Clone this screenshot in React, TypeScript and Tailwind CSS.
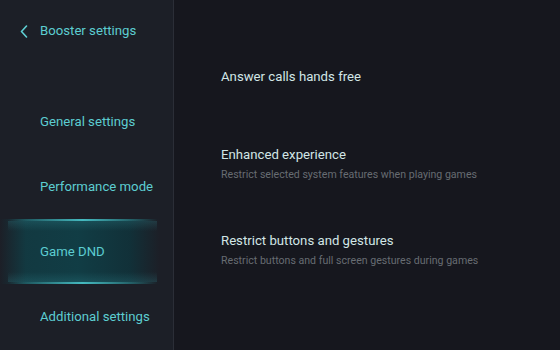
const navItems = ['General settings', 'Performance mode', 'Game DND', 'Additional settings'];

const options = [
  { title: 'Answer calls hands free' },
  { title: 'Enhanced experience', subtitle: 'Restrict selected system features when playing games' },
  { title: 'Restrict buttons and gestures', subtitle: 'Restrict buttons and full screen gestures during games' },
];

function Chevron() {
  return (
    <svg width="8" height="13" viewBox="0 0 8 13" className="shrink-0">
      <path d="M6.5 1 L1.5 6.5 L6.5 12" fill="none" stroke="#5fd0d4" strokeWidth="1.6" strokeLinecap="round" strokeLinejoin="round" />
    </svg>
  );
}

export default function App() {
  return (
    <div className="flex h-[350px] w-[560px] overflow-hidden bg-[#16171e] font-['Roboto','Liberation_Sans',sans-serif]">
      {/* sidebar */}
      <aside className="flex w-[174px] shrink-0 flex-col border-r border-[#2b2e37] bg-[#1c1f27]">
        <div className="flex h-[89px] items-start gap-[12px] pl-[20px] pt-[23px]">
          <span className="mt-[2px]"><Chevron /></span>
          <span className="text-[13.2px] leading-[16px] text-[#5ccdd1]">Booster settings</span>
        </div>
        {navItems.map((item) => {
          const active = item === 'Game DND';
          return (
            <div
              key={item}
              className={`relative flex h-[65px] items-center pl-[40px] ${active ? 'bg-[linear-gradient(90deg,rgba(14,60,68,0)_0%,rgba(15,66,74,0.75)_15%,rgba(15,66,74,0.85)_45%,rgba(13,56,64,0.7)_75%,rgba(13,50,58,0)_92%)]' : ''}`}
            >
              {active && (
                <>
                  <div className="absolute left-[8px] right-[16px] top-0 h-[2px] bg-gradient-to-r from-transparent via-[#45b9bf] to-transparent" />
                  <div className="absolute left-[8px] right-[16px] top-[2px] h-[10px] bg-gradient-to-b from-[rgba(60,170,180,0.18)] to-transparent" />
                  <div className="absolute bottom-0 left-[8px] right-[16px] h-[2px] bg-gradient-to-r from-transparent via-[#45b9bf] to-transparent" />
                  <div className="absolute bottom-[2px] left-[8px] right-[16px] h-[10px] bg-gradient-to-t from-[rgba(60,170,180,0.18)] to-transparent" />
                </>
              )}
              <span className="relative text-[13.2px] text-[#5ccdd1]">{item}</span>
            </div>
          );
        })}
      </aside>

      {/* content */}
      <main className="flex flex-1 flex-col pl-[47px] pt-[34px]">
        {options.map((opt) => (
          <div key={opt.title} className={`flex h-[86px] flex-col justify-center ${opt.subtitle ? 'pt-[2px]' : ''}`}>
            <div className="text-[13.2px] leading-[18px] text-[#d2e6e6]">{opt.title}</div>
            {opt.subtitle && (
              <div className="mt-[3px] text-[10.6px] leading-[16px] text-[#676c72]">{opt.subtitle}</div>
            )}
          </div>
        ))}
      </main>
    </div>
  );
}
